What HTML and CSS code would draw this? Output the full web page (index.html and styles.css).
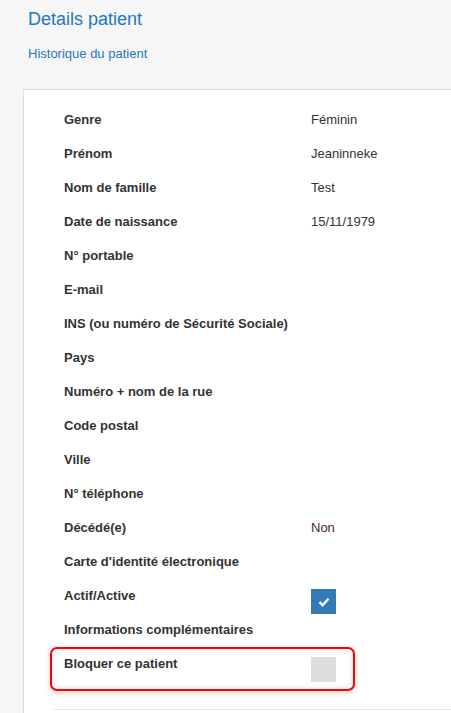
FILE: index.html
```html
<!DOCTYPE html>
<html lang="fr">
<head>
  <meta charset="UTF-8" />
  <meta name="viewport" content="width=device-width, initial-scale=1.0"/>
  <title>Details patient</title>
  <link rel="stylesheet" href="styles.css">
</head>
<body>
  <div class="page-head">
    <h1 class="page-title">Details patient</h1>
    <a class="history-link" href="#">Historique du patient</a>
  </div>

  <div class="card">
    <div class="row"><span class="label">Genre</span><span class="value">Féminin</span></div>
    <div class="row"><span class="label">Prénom</span><span class="value">Jeaninneke</span></div>
    <div class="row"><span class="label">Nom de famille</span><span class="value">Test</span></div>
    <div class="row"><span class="label">Date de naissance</span><span class="value">15/11/1979</span></div>
    <div class="row"><span class="label">N° portable</span><span class="value"></span></div>
    <div class="row"><span class="label">E-mail</span><span class="value"></span></div>
    <div class="row"><span class="label">INS (ou numéro de Sécurité Sociale)</span><span class="value"></span></div>
    <div class="row"><span class="label">Pays</span><span class="value"></span></div>
    <div class="row"><span class="label">Numéro + nom de la rue</span><span class="value"></span></div>
    <div class="row"><span class="label">Code postal</span><span class="value"></span></div>
    <div class="row"><span class="label">Ville</span><span class="value"></span></div>
    <div class="row"><span class="label">N° téléphone</span><span class="value"></span></div>
    <div class="row"><span class="label">Décédé(e)</span><span class="value deceased">Non</span></div>
    <div class="row"><span class="label">Carte d'identité électronique</span><span class="value"></span></div>
    <div class="row">
      <span class="label">Actif/Active</span>
      <span class="value">
        <span class="checkbox checked">
          <svg width="12" height="10" viewBox="0 0 12 10"><path d="M1.5 5.2 L4.6 8.2 L10.5 1.8" fill="none" stroke="#fff" stroke-width="2.4"/></svg>
        </span>
      </span>
    </div>
    <div class="row"><span class="label">Informations complémentaires</span><span class="value"></span></div>
    <div class="row highlighted">
      <span class="label">Bloquer ce patient</span>
      <span class="value"><span class="checkbox"></span></span>
    </div>
    <hr class="divider">
  </div>
</body>
</html>
```

FILE: styles.css
```css
body {
  margin: 0;
  background: #f6f6f6;
  font-family: 'Liberation Sans', Arial, sans-serif;
  color: #333;
  overflow: hidden;
}

.page-head {
  padding: 9px 0 0 28px;
  height: 89px;
  box-sizing: border-box;
}

.page-title {
  margin: 0;
  font-size: 18px;
  line-height: 20px;
  font-weight: normal;
  color: #1f77c0;
}

.history-link {
  display: block;
  margin-top: 17px;
  font-size: 13px;
  line-height: 16px;
  color: #1f77c0;
  text-decoration: none;
}

.card {
  margin-left: 23px;
  background: #fff;
  border: 1px solid #ddd;
  border-right: none;
  border-bottom: none;
  padding: 13px 0 0 40px;
  height: 623px;
}

.row {
  display: flex;
  align-items: flex-start;
  height: 34px;
  line-height: 34px;
  font-size: 13px;
  position: relative;
}

.label {
  width: 247px;
  flex-shrink: 0;
  font-weight: bold;
}

.value {
  color: #333;
}

.deceased {
  color: #4a1c3c;
}

.checkbox {
  display: flex;
  align-items: center;
  justify-content: center;
  width: 25px;
  height: 25px;
  margin-top: 10px;
  background: #ddd;
}

.checkbox.checked {
  background: #337ab7;
}

.highlighted::after {
  content: "";
  position: absolute;
  left: -14px;
  top: 0;
  width: 301px;
  height: 40px;
  border: 2px solid #f00;
  border-radius: 7px;
  box-shadow: 0 2px 6px rgba(0, 0, 0, 0.18), inset 0 0 6px rgba(0, 0, 0, 0.12);
}

.divider {
  margin: 28px 0 0 -10px;
  border: none;
  border-top: 1px solid #e6e6e6;
}
```
